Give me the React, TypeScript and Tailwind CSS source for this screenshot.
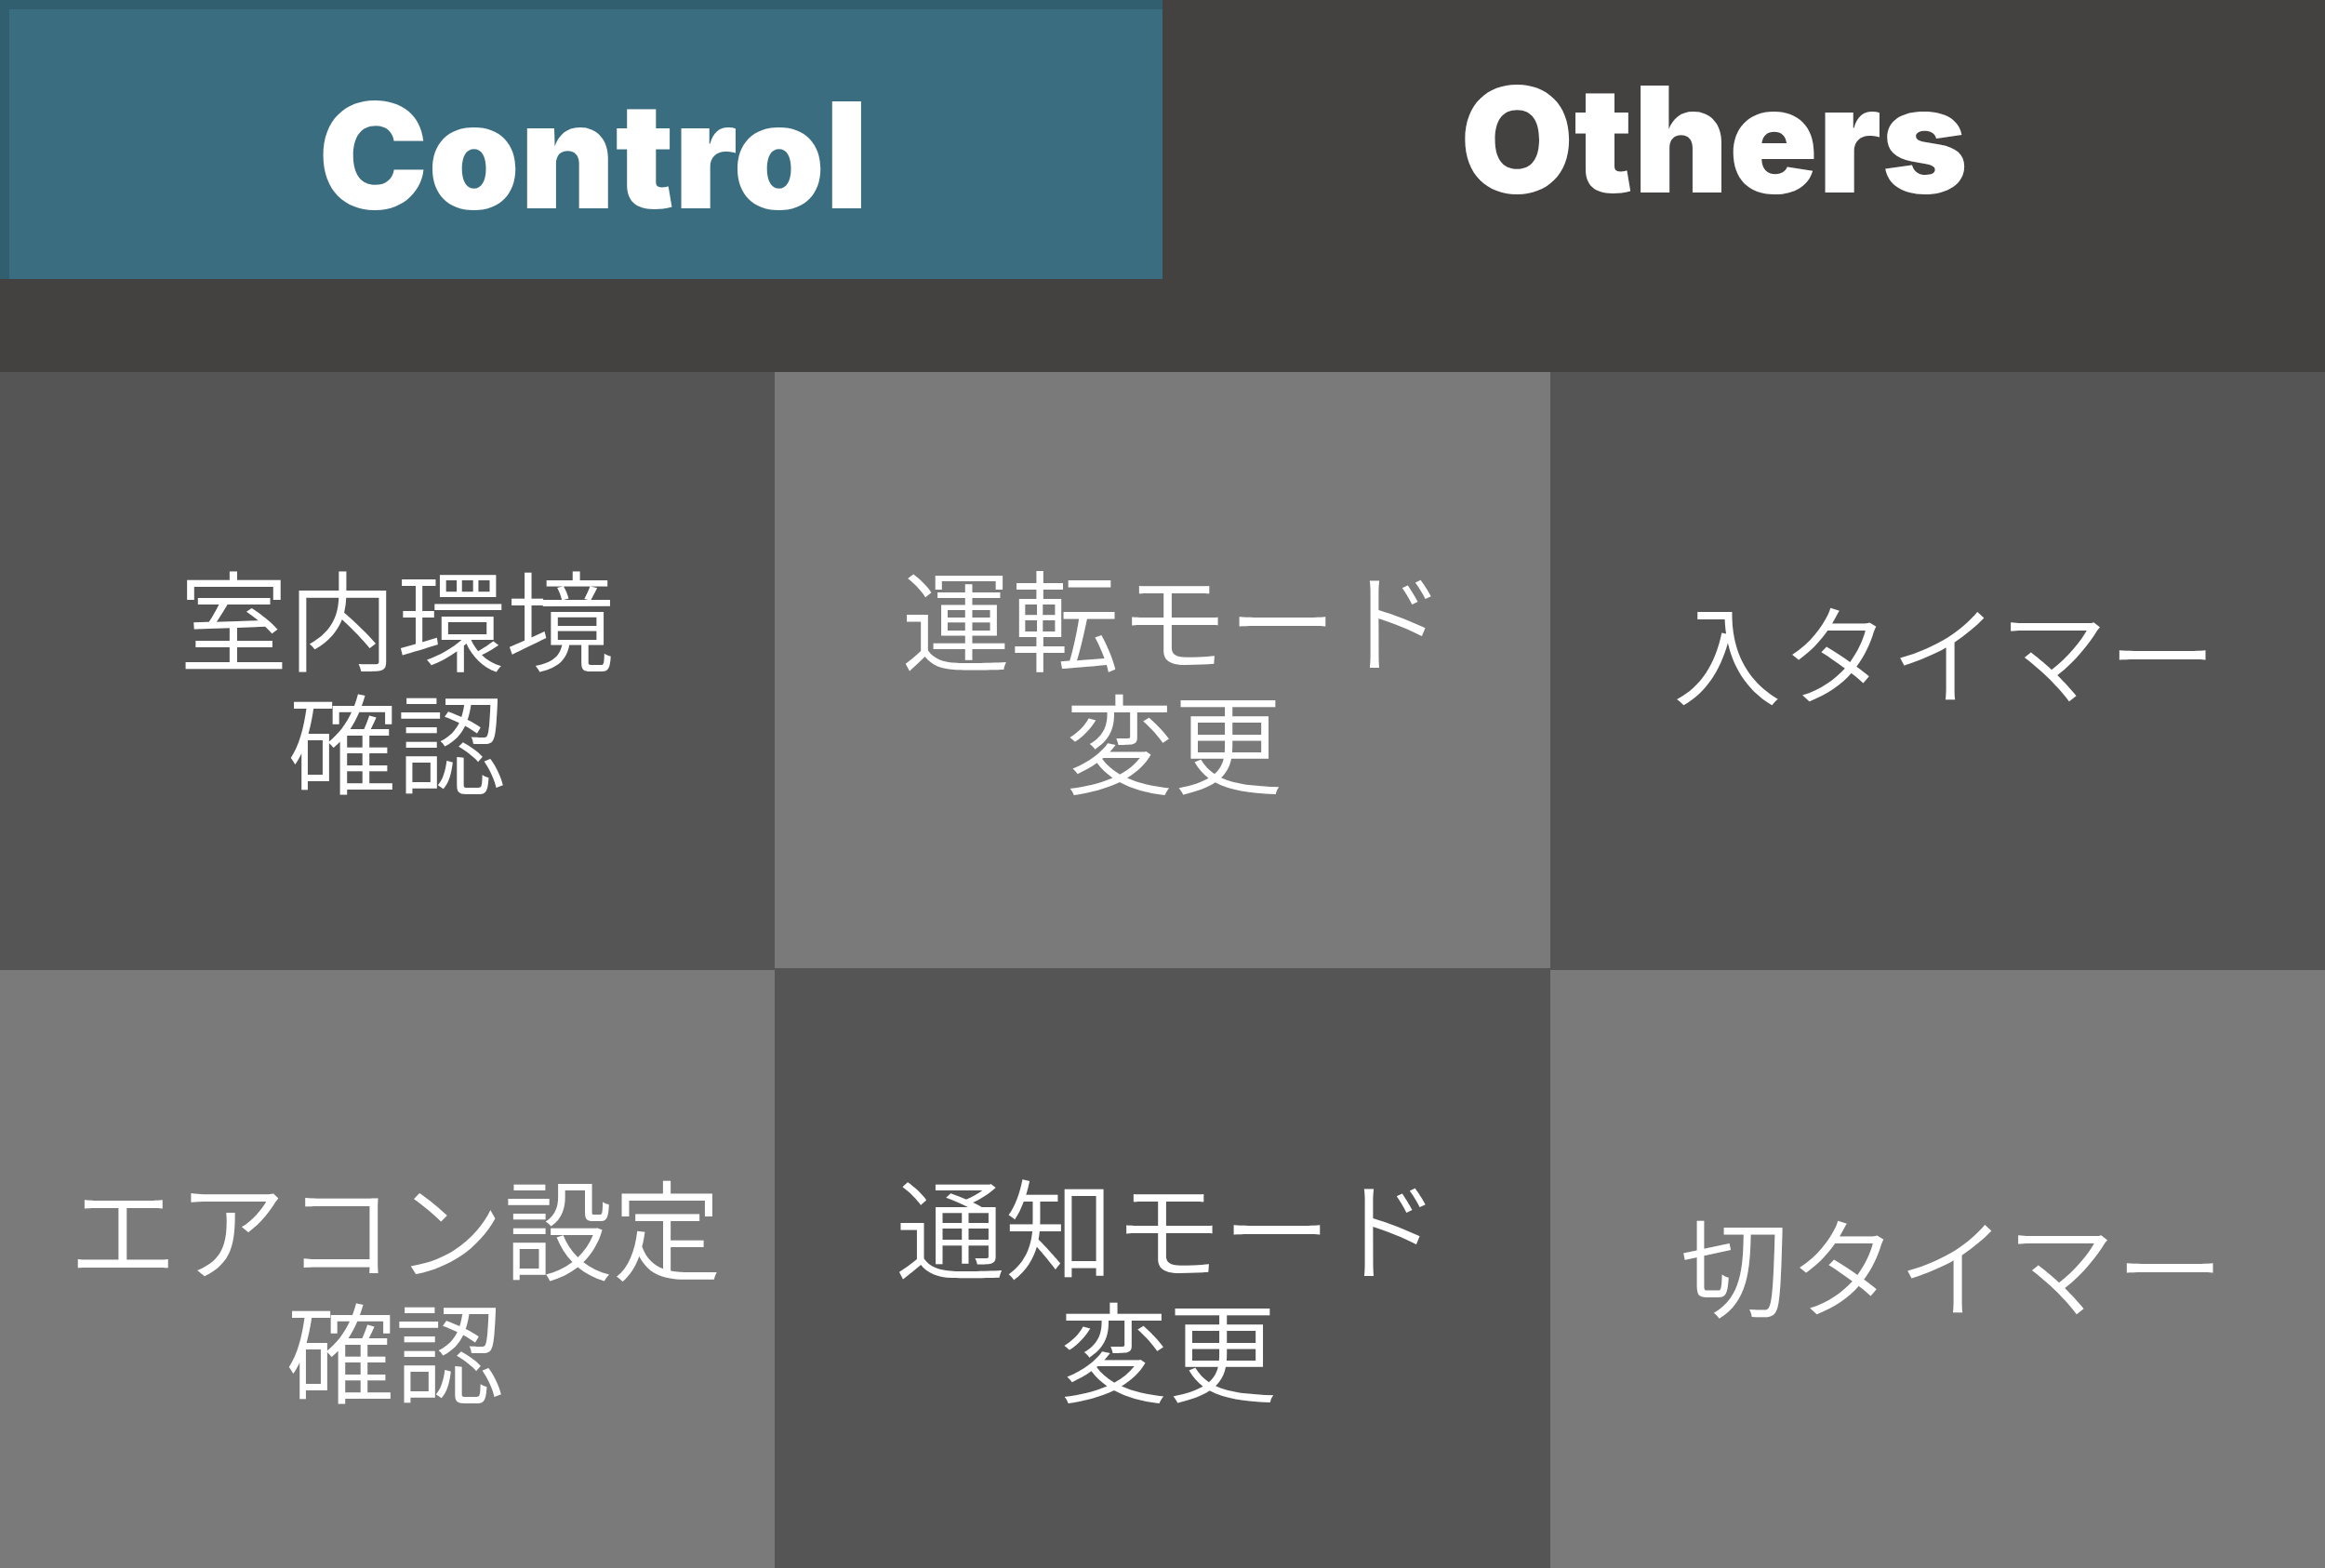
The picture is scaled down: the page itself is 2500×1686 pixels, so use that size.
const cells = [
  { label: '室内環境\n確認', style: 'bg-[#555555] pl-5 pt-3' },
  { label: '運転モード\n変更', style: 'bg-[#7a7a7a] pl-6 pt-3' },
  { label: '入タイマー', style: 'bg-[#555555] pl-4 pb-12' },
  { label: 'エアコン設定\n確認', style: 'bg-[#7a7a7a] pl-4 pt-9' },
  { label: '通知モード\n変更', style: '-mt-0.5 bg-[#555555] pl-3 pt-9' },
  { label: '切タイマー', style: 'bg-[#7a7a7a] pl-8 pb-4' },
];

export default function App() {
  return (
    <main className="flex min-h-screen flex-col bg-[#444240] text-white">
      <nav className="grid h-[400px] grid-cols-2 items-start font-['Inter',sans-serif] text-[158px] leading-none font-black">
        <button className="flex h-[300px] items-center justify-center border-t-[10px] border-l-[10px] border-[#315f6f] bg-[#3a6d7f] pt-6 pl-4">
          Control
        </button>
        <button className="flex h-[300px] items-center justify-center pr-16">Others</button>
      </nav>
      <section className="grid flex-1 grid-cols-3 grid-rows-2">
        {cells.map((cell) => (
          <button
            key={cell.label}
            className={`flex items-center justify-center text-center font-['Noto_Sans_CJK_JP',sans-serif] text-[117px] leading-[132px] font-[350] whitespace-pre ${cell.style}`}
          >
            {cell.label}
          </button>
        ))}
      </section>
    </main>
  );
}
